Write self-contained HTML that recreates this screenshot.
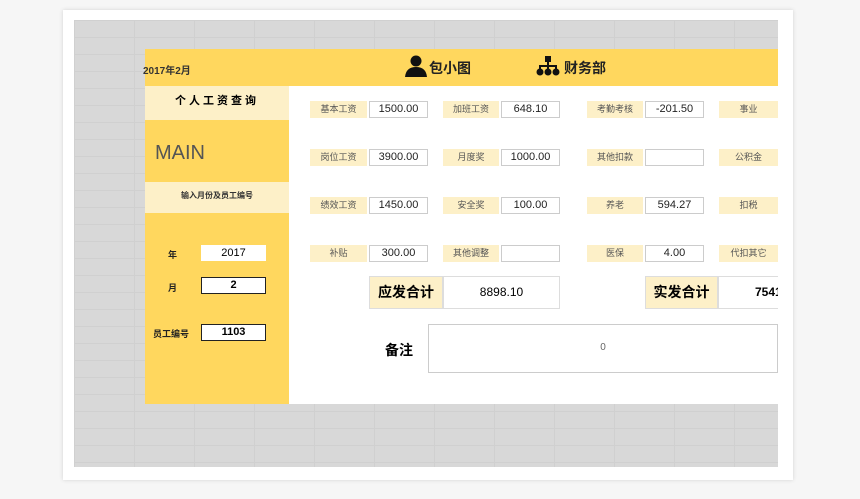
<!DOCTYPE html>
<html><head><meta charset="utf-8"><style>
*{margin:0;padding:0;box-sizing:border-box}
body{width:860px;height:499px;background:#f6f6f6;position:relative;overflow:hidden;font-family:"Liberation Sans","Noto Sans CJK SC",sans-serif}
.a{position:absolute}
.card{left:63px;top:10px;width:730px;height:470px;background:#fff;box-shadow:0 0 4px rgba(0,0,0,.15)}
.sheet{left:74px;top:20px;width:704px;height:447px;background:#d8d8d8;
background-image:linear-gradient(#d0d0d0 1px,transparent 1px),linear-gradient(90deg,#d0d0d0 1px,transparent 1px);background-size:60px 17px}
.lab{background:#fdf0c8;font-size:9px;color:#555;text-align:center;height:17px;line-height:17px}
.in{background:#fff;border:1px solid #ccc;font-size:11px;color:#222;text-align:center;height:17px;line-height:15px}
.ll{font-size:9px;font-weight:bold;color:#222}
</style></head><body>
<div class="a card"></div>
<div class="a sheet"></div>
<div class="a" style="left:145px;top:49px;width:633px;height:37px;background:#ffd75e"></div>
<div class="a" style="left:143px;top:62px;font-size:10px;font-weight:bold;color:#333">2017年2月</div>
<svg class="a" style="left:404px;top:55px" width="24" height="22" viewBox="0 0 24 22"><circle cx="12" cy="6" r="5.5" fill="#111"/><path d="M1 22 Q2 12 12 12 Q22 12 23 22Z" fill="#111"/></svg>
<div class="a" style="left:429px;top:58px;font-size:14px;font-weight:bold;color:#222">包小图</div>
<svg class="a" style="left:536px;top:56px" width="24" height="20" viewBox="0 0 24 20"><rect x="9" y="0" width="6" height="6" fill="#111"/><path d="M12 6V10M4 14V10H20V14M12 10V14" stroke="#111" stroke-width="2" fill="none"/><circle cx="4" cy="16" r="3.5" fill="#111"/><circle cx="12" cy="16" r="3.5" fill="#111"/><circle cx="20" cy="16" r="3.5" fill="#111"/></svg>
<div class="a" style="left:564px;top:58px;font-size:14px;font-weight:bold;color:#222">财务部</div>
<div class="a" style="left:145px;top:86px;width:144px;height:318px;background:#ffd75e"></div>
<div class="a" style="left:289px;top:86px;width:489px;height:318px;background:#fff"></div>
<div class="a" style="left:145px;top:86px;width:144px;height:34px;background:#fdf0c8;text-align:center;line-height:30px;font-size:11px;font-weight:bold;letter-spacing:3px">个人工资查询</div>
<div class="a" style="left:155px;top:142px;font-size:20px;color:#555">MAIN</div>
<div class="a" style="left:145px;top:182px;width:144px;height:31px;background:#fdf0c8;text-align:center;line-height:28px;font-size:8px;font-weight:bold;color:#333">输入月份及员工编号</div>
<div class="a ll" style="left:168px;top:248px">年</div>
<div class="a" style="left:201px;top:245px;width:65px;height:16px;background:#fff;font-size:11px;text-align:center;line-height:16px">2017</div>
<div class="a ll" style="left:168px;top:281px">月</div>
<div class="a" style="left:201px;top:277px;width:65px;height:17px;background:#fff;border:1.5px solid #222;font-size:11px;font-weight:bold;text-align:center;line-height:14px">2</div>
<div class="a ll" style="left:153px;top:327px">员工编号</div>
<div class="a" style="left:201px;top:324px;width:65px;height:17px;background:#fff;border:1.5px solid #222;font-size:11px;font-weight:bold;text-align:center;line-height:14px">1103</div>

<div class="a lab" style="left:310px;top:101px;width:57px">基本工资</div><div class="a in" style="left:369px;top:101px;width:59px">1500.00</div>
<div class="a lab" style="left:443px;top:101px;width:56px">加班工资</div><div class="a in" style="left:501px;top:101px;width:59px">648.10</div>
<div class="a lab" style="left:587px;top:101px;width:56px">考勤考核</div><div class="a in" style="left:645px;top:101px;width:59px">-201.50</div>
<div class="a lab" style="left:719px;top:101px;width:59px">事业</div>

<div class="a lab" style="left:310px;top:149px;width:57px">岗位工资</div><div class="a in" style="left:369px;top:149px;width:59px">3900.00</div>
<div class="a lab" style="left:443px;top:149px;width:56px">月度奖</div><div class="a in" style="left:501px;top:149px;width:59px">1000.00</div>
<div class="a lab" style="left:587px;top:149px;width:56px">其他扣款</div><div class="a in" style="left:645px;top:149px;width:59px"></div>
<div class="a lab" style="left:719px;top:149px;width:59px">公积金</div>

<div class="a lab" style="left:310px;top:197px;width:57px">绩效工资</div><div class="a in" style="left:369px;top:197px;width:59px">1450.00</div>
<div class="a lab" style="left:443px;top:197px;width:56px">安全奖</div><div class="a in" style="left:501px;top:197px;width:59px">100.00</div>
<div class="a lab" style="left:587px;top:197px;width:56px">养老</div><div class="a in" style="left:645px;top:197px;width:59px">594.27</div>
<div class="a lab" style="left:719px;top:197px;width:59px">扣税</div>

<div class="a lab" style="left:310px;top:245px;width:57px">补贴</div><div class="a in" style="left:369px;top:245px;width:59px">300.00</div>
<div class="a lab" style="left:443px;top:245px;width:56px">其他调整</div><div class="a in" style="left:501px;top:245px;width:59px"></div>
<div class="a lab" style="left:587px;top:245px;width:56px">医保</div><div class="a in" style="left:645px;top:245px;width:59px">4.00</div>
<div class="a lab" style="left:719px;top:245px;width:59px">代扣其它</div>

<div class="a" style="left:369px;top:276px;width:74px;height:33px;background:#fdf0c8;border:1px solid #ddd;font-size:14px;font-weight:bold;text-align:center;line-height:31px">应发合计</div>
<div class="a" style="left:443px;top:276px;width:117px;height:33px;border:1px solid #ddd;font-size:12px;text-align:center;line-height:31px">8898.10</div>
<div class="a" style="left:645px;top:276px;width:73px;height:33px;background:#fdf0c8;border:1px solid #ddd;font-size:14px;font-weight:bold;text-align:center;line-height:31px">实发合计</div>
<div class="a" style="left:718px;top:276px;width:60px;height:33px;border:1px solid #ddd;border-right:none;font-size:12px;font-weight:bold;line-height:31px;padding-left:36px;overflow:hidden;white-space:nowrap">7541</div>

<div class="a" style="left:385px;top:340px;font-size:14px;font-weight:bold">备注</div>
<div class="a" style="left:428px;top:324px;width:350px;height:49px;border:1.5px solid #ccc;font-size:10px;color:#666;text-align:center;line-height:46px">0</div>
</body></html>
